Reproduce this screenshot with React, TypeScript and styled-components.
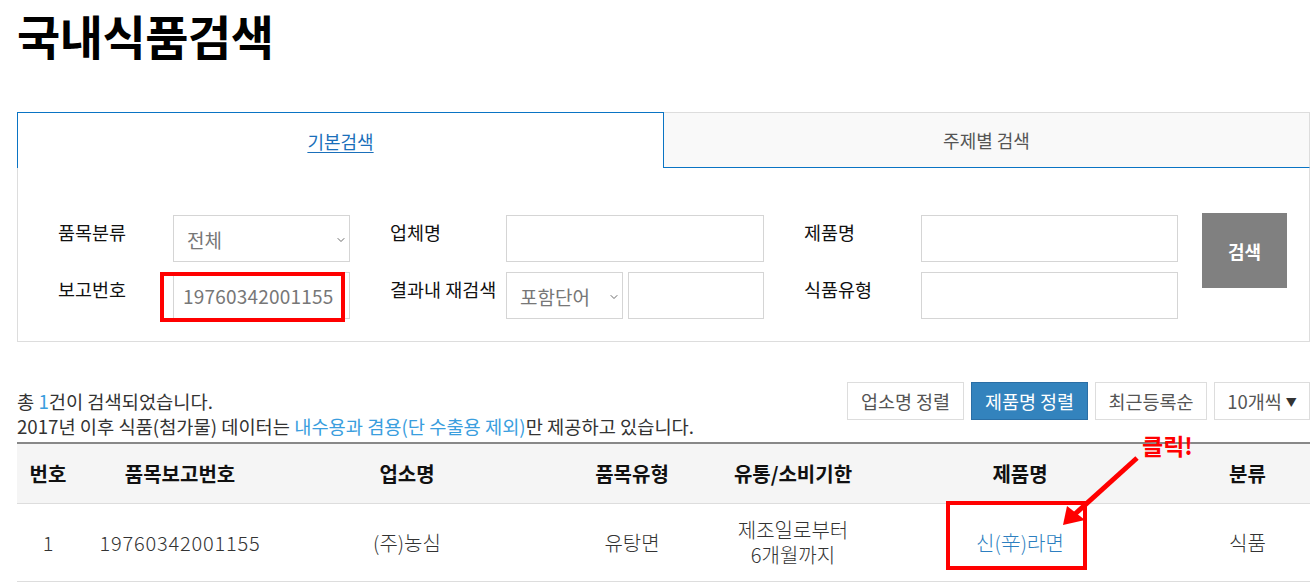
import styled, { createGlobalStyle } from "styled-components"
import { ChevronDown } from "lucide-react"

const GlobalStyle = createGlobalStyle`
  body {
    margin: 0;
    background: #fff;
    color: #333;
    font-family: "Noto Sans CJK KR", "Noto Sans", sans-serif;
  }
  * {
    box-sizing: border-box;
  }
`

const columns = [62, 202, 252, 198, 124, 330, 125]

const headers = ["번호", "품목보고번호", "업소명", "품목유형", "유통/소비기한", "제품명", "분류"]

function App() {
  return (
    <Page>
      <GlobalStyle />
      <Title>국내식품검색</Title>

      <Tabs>
        <Tab $active>
          <TabLabel $active>기본검색</TabLabel>
        </Tab>
        <Tab>
          <TabLabel>주제별 검색</TabLabel>
        </Tab>
      </Tabs>

      <SearchPanel>
        <FormGrid>
          <Field>
            <Label $width={115}>품목분류</Label>
            <SelectBox $width={177}>
              <Select defaultValue="all">
                <option value="all">전체</option>
              </Select>
              <Chevron size={12} strokeWidth={1.75} />
            </SelectBox>
          </Field>
          <Field>
            <Label $width={116}>업체명</Label>
            <Input $width={258} />
          </Field>
          <Field>
            <Label $width={117}>제품명</Label>
            <Input $width={257} />
          </Field>

          <Field>
            <Label $width={115}>보고번호</Label>
            <Highlighted>
              <Input $width={177} defaultValue="19760342001155" />
              <RedBox />
            </Highlighted>
          </Field>
          <Field>
            <Label $width={116}>결과내 재검색</Label>
            <SelectBox $width={117}>
              <Select defaultValue="include">
                <option value="include">포함단어</option>
              </Select>
              <Chevron size={12} strokeWidth={1.75} />
            </SelectBox>
            <Input $width={136} $gap={5} />
          </Field>
          <Field>
            <Label $width={117}>식품유형</Label>
            <Input $width={257} />
          </Field>
        </FormGrid>
        <SearchButton>검색</SearchButton>
      </SearchPanel>

      <ResultBar>
        <ResultInfo>
          <p>
            총 <Accent>1</Accent>건이 검색되었습니다.
          </p>
          <p>
            2017년 이후 식품(첨가물) 데이터는 <Accent>내수용과 겸용(단 수출용 제외)</Accent>만 제공하고 있습니다.
          </p>
        </ResultInfo>
        <SortGroup>
          <SortButton $width={117}>업소명 정렬</SortButton>
          <SortButton $width={117} $active>제품명 정렬</SortButton>
          <SortButton $width={112}>최근등록순</SortButton>
          <SortButton $width={96}>
            10개씩 <Caret>▼</Caret>
          </SortButton>
        </SortGroup>
      </ResultBar>

      <Table>
        <colgroup>
          {columns.map((w, i) => (
            <col key={i} style={{ width: w }} />
          ))}
        </colgroup>
        <thead>
          <tr>
            {headers.map((h) => (
              <Th key={h}>{h}</Th>
            ))}
          </tr>
        </thead>
        <tbody>
          <tr>
            <Td>1</Td>
            <Td $digits>19760342001155</Td>
            <Td>(주)농심</Td>
            <Td>유탕면</Td>
            <Td>
              제조일로부터
              <br />
              6개월까지
            </Td>
            <ProductCell>
              <ProductLink>신(辛)라면</ProductLink>
              <ProductBox />
              <Callout>클릭!</Callout>
              <Arrow width="90" height="80" viewBox="0 0 90 80">
                <line x1="82" y1="4" x2="20" y2="60" stroke="#ff0000" strokeWidth="5" />
                <polygon points="8,71 12,52 30,66" fill="#ff0000" />
              </Arrow>
            </ProductCell>
            <Td>식품</Td>
          </tr>
        </tbody>
      </Table>
    </Page>
  )
}

const Page = styled.div`
  width: 1314px;
  padding: 0 4px 0 17px;
`

const Title = styled.h1`
  margin: 0;
  height: 70px;
  font-size: 47px;
  line-height: 70px;
  font-weight: 700;
  color: #000;
  letter-spacing: -0.5px;
`

const Tabs = styled.div`
  display: flex;
  margin-top: 42px;
  height: 56px;
`

const Tab = styled.div<{ $active?: boolean }>`
  flex: 1;
  display: flex;
  align-items: center;
  justify-content: center;
  background: ${(p) => (p.$active ? "#fff" : "#f9f9f9")};
  border: 1px solid ${(p) => (p.$active ? "#0a74c4" : "#ddd")};
  border-bottom: ${(p) => (p.$active ? "none" : "1px solid #0a74c4")};
  border-left: ${(p) => (p.$active ? "1px solid #0a74c4" : "none")};
`

const TabLabel = styled.span<{ $active?: boolean }>`
  font-size: 18px;
  color: ${(p) => (p.$active ? "#1a6fba" : "#555")};
  text-decoration: ${(p) => (p.$active ? "underline" : "none")};
  text-underline-offset: 3px;
`

const SearchPanel = styled.div`
  display: flex;
  align-items: flex-start;
  gap: 24px;
  height: 174px;
  padding: 47px 0 0 40px;
  border: 1px solid #ddd;
  border-top: none;
`

const FormGrid = styled.div`
  display: grid;
  grid-template-columns: 292px 374px 374px;
  column-gap: 40px;
  row-gap: 10px;
`

const Field = styled.div`
  display: flex;
  height: 47px;
`

const Label = styled.span<{ $width: number }>`
  flex: none;
  width: ${(p) => p.$width}px;
  padding-top: 3px;
  font-size: 18.5px;
  line-height: 28px;
  color: #111;
  white-space: nowrap;
`

const Input = styled.input<{ $width: number; $gap?: number }>`
  width: ${(p) => p.$width}px;
  height: 47px;
  margin-left: ${(p) => p.$gap || 0}px;
  padding: 0 9px;
  border: 1px solid #d5d5d5;
  font-family: inherit;
  font-size: 19px;
  letter-spacing: 0.2px;
  color: #777;
  outline: none;
`

const SelectBox = styled.div<{ $width: number }>`
  position: relative;
  width: ${(p) => p.$width}px;
  height: 47px;
`

const Select = styled.select`
  appearance: none;
  width: 100%;
  height: 100%;
  padding: 2px 0 0 13px;
  border: 1px solid #d5d5d5;
  background: #fff;
  font-family: inherit;
  font-size: 19px;
  color: #777;
  outline: none;
`

const Chevron = styled(ChevronDown)`
  position: absolute;
  right: 3px;
  top: 19px;
  color: #555;
  pointer-events: none;
`

const Highlighted = styled.div`
  position: relative;
`

const RedBox = styled.div`
  position: absolute;
  left: -13px;
  top: 0;
  width: 185px;
  height: 50px;
  border: 4px solid #ff0000;
  pointer-events: none;
`

const SearchButton = styled.button`
  width: 85px;
  height: 75px;
  margin-top: -2px;
  border: none;
  background: #808080;
  color: #fff;
  font-family: inherit;
  font-size: 18px;
  font-weight: 700;
`

const ResultBar = styled.div`
  display: flex;
  justify-content: space-between;
  align-items: flex-start;
  height: 60px;
  margin-top: 40px;
`

const ResultInfo = styled.div`
  margin-top: 6px;
  font-size: 18.7px;
  line-height: 25px;
  color: #333;

  p {
    margin: 0;
    white-space: nowrap;
  }
`

const Accent = styled.span`
  color: #3a9ede;
`

const SortGroup = styled.div`
  display: flex;
  gap: 7px;
`

const SortButton = styled.button<{ $width: number; $active?: boolean }>`
  width: ${(p) => p.$width}px;
  height: 38px;
  padding: 0;
  border: 1px solid ${(p) => (p.$active ? "#2a6ea5" : "#ddd")};
  background: ${(p) => (p.$active ? "#3383bd" : "#fff")};
  color: ${(p) => (p.$active ? "#fff" : "#555")};
  font-family: inherit;
  font-size: 18.5px;
  white-space: nowrap;
`

const Caret = styled.span`
  font-size: 11px;
  color: #333;
  vertical-align: 2px;
`

const Table = styled.table`
  width: 100%;
  border-collapse: collapse;
  table-layout: fixed;
  border-top: 2px solid #888;
`

const Th = styled.th`
  height: 60px;
  background: #f5f5f5;
  border-bottom: 1px solid #ddd;
  font-size: 20px;
  font-weight: 700;
  color: #111;
  white-space: nowrap;
`

const Td = styled.td<{ $digits?: boolean }>`
  height: 78px;
  border-bottom: 1px solid #ddd;
  text-align: center;
  font-size: 20px;
  font-weight: 300;
  line-height: 25px;
  letter-spacing: ${(p) => (p.$digits ? "0.8px" : "0")};
  color: #333;
  white-space: nowrap;
`

const ProductCell = styled(Td)`
  position: relative;
`

const ProductLink = styled.a`
  color: #2d7fc0;
  cursor: pointer;
`

const ProductBox = styled.div`
  position: absolute;
  left: 91px;
  top: -3px;
  width: 141px;
  height: 69px;
  border: 4px solid #ff0000;
  pointer-events: none;
`

const Callout = styled.span`
  position: absolute;
  left: 287px;
  top: -72px;
  font-size: 23px;
  line-height: 26px;
  font-weight: 700;
  color: #ff0000;
  white-space: nowrap;
`

const Arrow = styled.svg`
  position: absolute;
  left: 200px;
  top: -50px;
  pointer-events: none;
`

export default App
